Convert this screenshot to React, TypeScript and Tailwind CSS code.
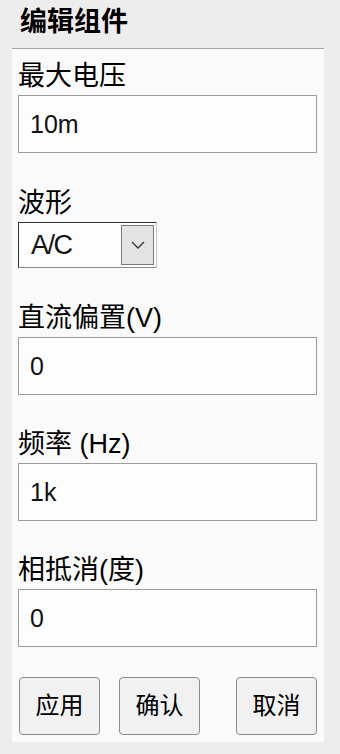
import React from "react";

const Field: React.FC<{ label: string; value: string }> = ({ label, value }) => (
  <div className="flex flex-col">
    <label className="text-[27px] leading-[30px] text-black">{label}</label>
    <input
      readOnly
      defaultValue={value}
      className="mt-[4px] h-[58px] w-[299px] border border-[#9c9c9c] bg-[#fdfdfd] pl-[11px] text-[25px] text-[#111] outline-none"
    />
  </div>
);

const App: React.FC = () => {
  return (
    <div className="min-h-[754px] w-[340px] bg-[#ededed] font-['Liberation_Sans','Noto_Sans_CJK_SC',sans-serif]">
      {/* Header */}
      <div className="h-[48px] pl-[20px] pt-[6px]">
        <h1 className="text-[27px] font-bold leading-[32px] text-black">编辑组件</h1>
      </div>

      {/* Panel */}
      <div className="ml-[12px] w-[312px] border-t border-[#a6a6a6] bg-[#fafafa] pb-[7px] pl-[6px] pt-[12px]">
        <Field label="最大电压" value="10m" />

        {/* Waveform select */}
        <div className="mt-[35px] flex flex-col">
          <span className="text-[27px] leading-[30px] text-black">波形</span>
          <div className="mt-[4px] flex h-[46px] w-[139px] items-center border-t-[1.5px] border-l-[1.5px] border-b border-r border-t-[#333] border-l-[#333] border-b-[#8a8a8a] border-r-[#c8c8c8] bg-[#fdfdfd]">
            <span className="flex-1 pl-[12px] text-[27px] tracking-[-1.5px] text-[#111]">A/C</span>
            <div className="mr-[2px] flex h-[40px] w-[33px] items-center justify-center border border-[#7a7a7a] bg-[#e3e3e3]">
              <svg width="14" height="8" viewBox="0 0 14 8" fill="none">
                <path d="M1 1l6 6 6-6" stroke="#333" strokeWidth="1.3" />
              </svg>
            </div>
          </div>
        </div>

        <div className="mt-[35px]">
          <Field label="直流偏置(V)" value="0" />
        </div>
        <div className="mt-[34px]">
          <Field label="频率 (Hz)" value="1k" />
        </div>
        <div className="mt-[34px]">
          <Field label="相抵消(度)" value="0" />
        </div>

        {/* Buttons */}
        <div className="mt-[30px] flex">
          <button className="ml-[1px] h-[58px] w-[81px] rounded-[4px] border border-[#8c8c8c] bg-[#f1f1f1] text-[24px] text-black">
            应用
          </button>
          <button className="ml-[19px] h-[58px] w-[81px] rounded-[4px] border border-[#8c8c8c] bg-[#f1f1f1] text-[24px] text-black">
            确认
          </button>
          <button className="ml-[36px] h-[58px] w-[81px] rounded-[4px] border border-[#8c8c8c] bg-[#f1f1f1] text-[24px] text-black">
            取消
          </button>
        </div>
      </div>
    </div>
  );
};

export default App;
